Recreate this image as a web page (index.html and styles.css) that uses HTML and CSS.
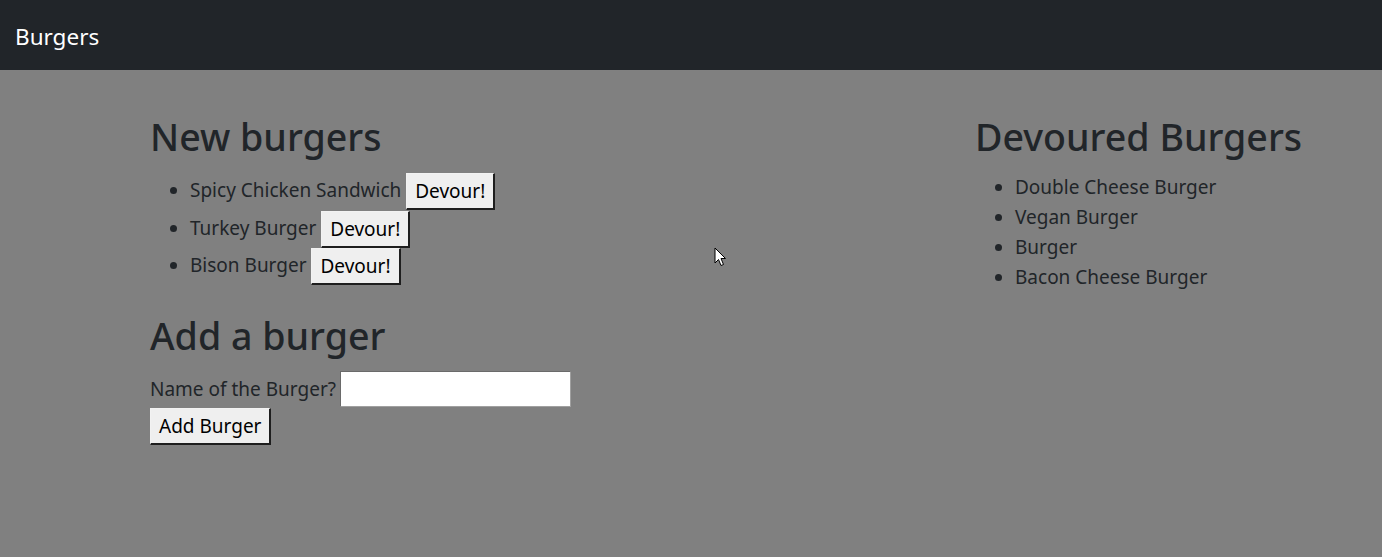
FILE: index.html
```html
<!DOCTYPE html>
<html lang="en">
<head>
<meta charset="utf-8">
<title>Burgers</title>
<link rel="stylesheet" href="styles.css">
</head>
<body>
<nav class="navbar">
  <span class="brand">Burgers</span>
</nav>
<main class="page">
  <section class="col col-new">
    <h1 class="title">New burgers</h1>
    <ul class="list list-new">
      <li>Spicy Chicken Sandwich <button class="btn">Devour!</button></li>
      <li>Turkey Burger <button class="btn">Devour!</button></li>
      <li>Bison Burger <button class="btn">Devour!</button></li>
    </ul>
    <h1 class="title">Add a burger</h1>
    <form class="add-form">
      <div class="field">
        <label class="label" for="burger">Name of the Burger?</label>
        <input class="input" id="burger" type="text">
      </div>
      <button class="btn" type="button">Add Burger</button>
    </form>
  </section>
  <section class="col col-devoured">
    <h1 class="title">Devoured Burgers</h1>
    <ul class="list">
      <li>Double Cheese Burger</li>
      <li>Vegan Burger</li>
      <li>Burger</li>
      <li>Bacon Cheese Burger</li>
    </ul>
  </section>
</main>
<svg class="cursor" width="13" height="21" viewBox="0 0 13 21">
  <path d="M1 1 L1 16 L4.5 12.5 L7 18.5 L9.5 17.5 L7 11.5 L11.5 11.5 Z" fill="#fff" stroke="#000" stroke-width="1" stroke-linejoin="round"/>
</svg>
</body>
</html>
```
FILE: styles.css
```css
* { box-sizing: border-box; }
html, body { margin: 0; padding: 0; }
body {
  background: #808080;
  color: #212529;
  font-family: "Noto Sans", "Open Sans", sans-serif;
  font-size: 19px;
  line-height: 30px;
  height: 557px;
  overflow: hidden;
  position: relative;
}
.navbar {
  height: 70px;
  background: #212529;
  display: flex;
  align-items: center;
  padding: 4px 15px 0;
}
.brand {
  color: #fff;
  font-size: 22.5px;
  line-height: 36px;
}
.page {
  display: flex;
  padding: 37px 0 0 150px;
}
.col-new { width: 825px; }
.col-devoured { flex: 1; }
.title {
  font-size: 37.6px;
  font-weight: 500;
  line-height: 60px;
  margin: 0 0 5px;
}
.list {
  margin: 0 0 20px;
  padding-left: 40px;
}
.list-new { margin-bottom: 21.5px; }
.list-new li { height: 37.5px; line-height: 37.5px; }
.btn {
  font-family: inherit;
  font-size: 19px;
  line-height: 28px;
  color: #000;
  background: #efefef;
  border-style: solid;
  border-width: 1px 2px 2px 1px;
  border-color: #f2f2f2 #1e1e1e #1e1e1e #f2f2f2;
  padding: 3px 8px;
  margin: 0;
  vertical-align: middle;
}
.field {
  display: flex;
  align-items: center;
  gap: 4px;
  height: 36px;
}
.input {
  width: 231px;
  height: 36px;
  background: #fff;
  border-style: solid;
  border-width: 1px;
  border-color: #6a6a6a #a0a0a0 #a0a0a0 #6a6a6a;
  margin: 0;
}
.add-form .btn { margin-top: 1px; }
.cursor {
  position: absolute;
  left: 714px;
  top: 247px;
}
```
